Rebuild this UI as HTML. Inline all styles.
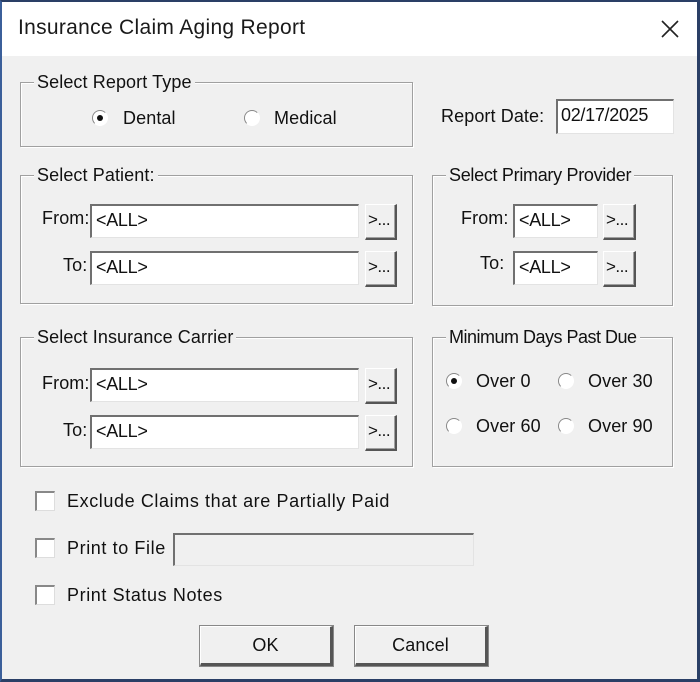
<!DOCTYPE html>
<html><head><style>
*{margin:0;padding:0;box-sizing:border-box}
body{width:700px;height:682px;overflow:hidden;background:#f0f0f0;font-family:"Liberation Sans",Arial,sans-serif;font-size:18px;color:#111;position:relative;letter-spacing:0.1px}
.a{position:absolute;white-space:nowrap}
.win{position:absolute;left:0;top:0;width:700px;height:682px;border-left:2px solid #3b5f9a;border-right:3px solid #2a3f66;border-top:2px solid #2a3f66;border-bottom:3px solid #2a3f66}
.title{position:absolute;left:2px;top:2px;width:695px;height:54px;background:#fff}
.grp{position:absolute;border:1px solid #a0a0a0;box-shadow:inset 1px 1px 0 #fff,1px 1px 0 #fff}
.leg{position:absolute;background:#f0f0f0;padding:0 3px;top:-12px;line-height:22px}
.inp{position:absolute;background:#fff;border-top:2px solid #707070;border-left:2px solid #707070;border-right:1px solid #e3e3e3;border-bottom:1px solid #e3e3e3;padding-left:4px;line-height:29px;letter-spacing:-0.3px}
.btn{position:absolute;background:#f0f0f0;border-top:1px solid #fff;border-left:1px solid #fff;border-right:2px solid #555;border-bottom:2px solid #555;box-shadow:inset -1px -1px 0 #a0a0a0;font-size:17px;line-height:30px;padding-left:2px;letter-spacing:-0.5px}
.rad{position:absolute;width:16px;height:16px;border-radius:50%;background:#fff;border:1px solid #888;border-color:#888 #fff #fff #888}
.rad.on::after{content:"";position:absolute;left:4px;top:4px;width:6px;height:6px;border-radius:50%;background:#111}
.chk{position:absolute;width:20px;height:20px;background:#fff;border-top:2px solid #888;border-left:2px solid #888;border-right:1px solid #ddd;border-bottom:1px solid #ddd}
.pb{position:absolute;background:#f0f0f0;border-top:1px solid #fff;border-left:1px solid #fff;border-right:3px solid #555;border-bottom:3px solid #555;box-shadow:0 0 0 1px #888;text-align:center;line-height:36px}
</style></head><body>
<div class="title"></div>
<div class="a" style="left:18px;top:16px;font-size:21px;letter-spacing:0.3px;color:#1a1a1a">Insurance Claim Aging Report</div>
<svg class="a" style="left:660px;top:19px" width="20" height="20"><path d="M2 2L18 18M18 2L2 18" stroke="#222" stroke-width="1.6"/></svg>

<div class="grp" style="left:20px;top:82px;width:393px;height:65px"><div class="leg" style="left:13px">Select Report Type</div></div>
<div class="rad on" style="left:92px;top:110px"></div><div class="a" style="left:123px;top:108px">Dental</div>
<div class="rad" style="left:244px;top:110px"></div><div class="a" style="left:274px;top:108px">Medical</div>

<div class="a" style="left:441px;top:106px">Report Date:</div>
<div class="inp" style="left:556px;top:99px;width:118px;height:35px;padding-left:3px">02/17/2025</div>

<div class="grp" style="left:20px;top:175px;width:393px;height:129px"><div class="leg" style="left:13px">Select Patient:</div></div>
<div class="a" style="left:42px;top:208px">From:</div>
<div class="inp" style="left:90px;top:204px;width:269px;height:34px">&lt;ALL&gt;</div>
<div class="btn" style="left:365px;top:204px;width:32px;height:36px">&gt;...</div>
<div class="a" style="left:63px;top:255px">To:</div>
<div class="inp" style="left:90px;top:251px;width:269px;height:34px">&lt;ALL&gt;</div>
<div class="btn" style="left:365px;top:251px;width:32px;height:36px">&gt;...</div>

<div class="grp" style="left:432px;top:175px;width:241px;height:131px"><div class="leg" style="left:13px;letter-spacing:-0.3px">Select Primary Provider</div></div>
<div class="a" style="left:461px;top:208px">From:</div>
<div class="inp" style="left:513px;top:204px;width:85px;height:34px">&lt;ALL&gt;</div>
<div class="btn" style="left:603px;top:204px;width:33px;height:36px">&gt;...</div>
<div class="a" style="left:480px;top:253px">To:</div>
<div class="inp" style="left:513px;top:251px;width:85px;height:34px">&lt;ALL&gt;</div>
<div class="btn" style="left:603px;top:251px;width:33px;height:36px">&gt;...</div>

<div class="grp" style="left:20px;top:337px;width:393px;height:130px"><div class="leg" style="left:13px">Select Insurance Carrier</div></div>
<div class="a" style="left:42px;top:373px">From:</div>
<div class="inp" style="left:90px;top:368px;width:269px;height:34px">&lt;ALL&gt;</div>
<div class="btn" style="left:365px;top:368px;width:32px;height:36px">&gt;...</div>
<div class="a" style="left:63px;top:420px">To:</div>
<div class="inp" style="left:90px;top:415px;width:269px;height:34px">&lt;ALL&gt;</div>
<div class="btn" style="left:365px;top:415px;width:32px;height:36px">&gt;...</div>

<div class="grp" style="left:432px;top:337px;width:241px;height:130px"><div class="leg" style="left:13px;letter-spacing:-0.5px">Minimum Days Past Due</div></div>
<div class="rad on" style="left:446px;top:373px"></div><div class="a" style="left:476px;top:371px">Over 0</div>
<div class="rad" style="left:558px;top:373px"></div><div class="a" style="left:588px;top:371px">Over 30</div>
<div class="rad" style="left:446px;top:418px"></div><div class="a" style="left:476px;top:416px">Over 60</div>
<div class="rad" style="left:558px;top:418px"></div><div class="a" style="left:588px;top:416px">Over 90</div>

<div class="chk" style="left:35px;top:491px"></div><div class="a" style="left:67px;top:491px;letter-spacing:0.6px">Exclude Claims that are Partially Paid</div>
<div class="chk" style="left:35px;top:538px"></div><div class="a" style="left:67px;top:538px;letter-spacing:0.6px">Print to File</div>
<div class="inp" style="left:173px;top:533px;width:301px;height:33px;background:#f0f0f0"></div>
<div class="chk" style="left:35px;top:585px"></div><div class="a" style="left:67px;top:585px;letter-spacing:0.6px">Print Status Notes</div>

<div class="pb" style="left:200px;top:626px;width:133px;height:40px">OK</div>
<div class="pb" style="left:355px;top:626px;width:133px;height:40px">Cancel</div>
<div class="win"></div>
</body></html>
